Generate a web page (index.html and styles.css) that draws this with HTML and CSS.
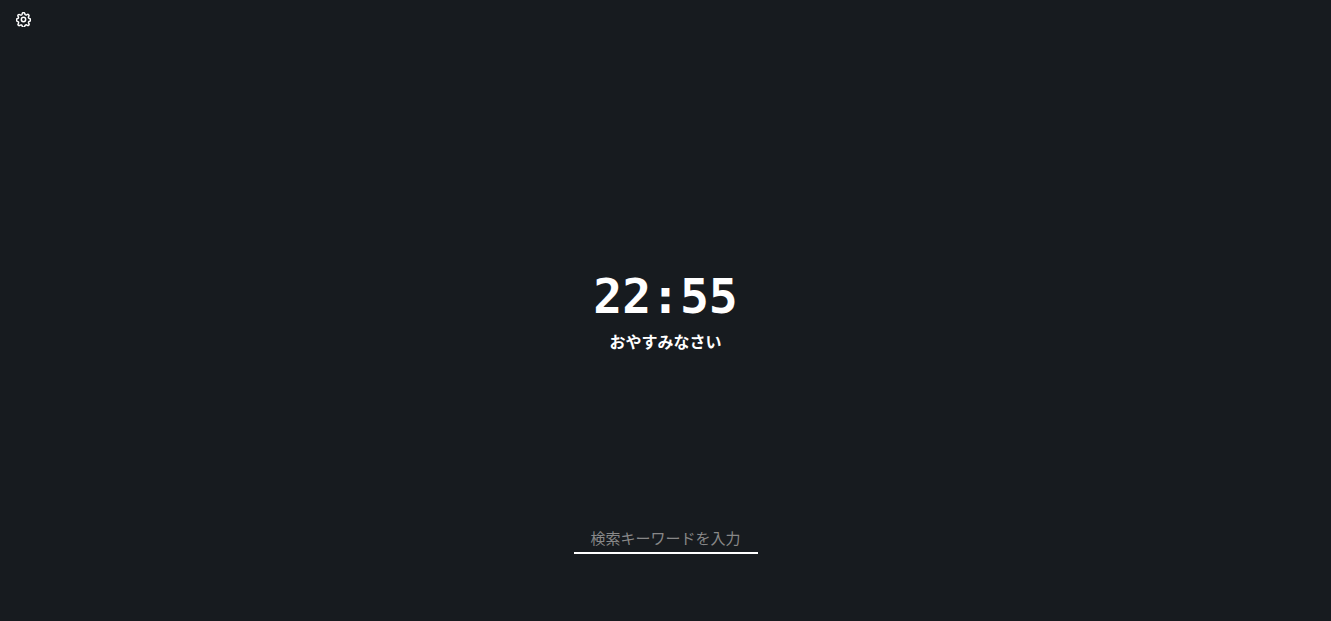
FILE: index.html
```html
<!DOCTYPE html>
<html lang="ja">
<head>
<meta charset="utf-8">
<title>22:55</title>
<link rel="stylesheet" href="styles.css">
</head>
<body>
<header class="toolbar">
<button class="settings" type="button" aria-label="設定">
<svg class="gear" viewBox="0 0 16 16" aria-hidden="true"><circle cx="8" cy="8" r="2.3"/><path d="M9.3 1.5c-.4-1.2-2.2-1.2-2.6 0l-.2.8a1.4 1.4 0 0 1-2 .8l-.6-.3c-1.1-.6-2.4.6-1.7 1.8l.3.5a1.4 1.4 0 0 1-.8 2l-.5.1c-1.2.4-1.2 2.2 0 2.6l.6.2a1.4 1.4 0 0 1 .8 2l-.3.6c-.6 1.1.6 2.4 1.8 1.7l.5-.3a1.4 1.4 0 0 1 2 .8l.1.5c.4 1.2 2.2 1.2 2.6 0l.2-.6a1.4 1.4 0 0 1 2-.8l.6.3c1.1.6 2.4-.6 1.7-1.8l-.3-.5a1.4 1.4 0 0 1 .8-2l.5-.1c1.2-.4 1.2-2.2 0-2.6l-.6-.2a1.4 1.4 0 0 1-.8-2l.3-.6c.6-1.1-.6-2.4-1.8-1.7l-.5.3a1.4 1.4 0 0 1-2-.8z"/></svg>
</button>
</header>
<main class="clock">
<time class="time" datetime="22:55">22:55</time>
<p class="greeting">おやすみなさい</p>
</main>
<form class="search">
<input class="query" type="text" placeholder="検索キーワードを入力" aria-label="検索キーワードを入力">
</form>
</body>
</html>
```
FILE: styles.css
```css
* { box-sizing: border-box; }
body {
  margin: 0;
  min-height: 100vh;
  display: grid;
  grid-template-rows: 1fr auto 1fr;
  justify-items: center;
  background: #171b1f;
  color: #fff;
  font-family: "Noto Sans CJK JP", sans-serif;
}
.toolbar { justify-self: start; padding: 12px 16px; }
.settings { display: block; padding: 0; border: 0; background: none; color: inherit; cursor: pointer; }
.gear { display: block; width: 15px; height: 15px; fill: none; stroke: currentColor; stroke-width: 1.6; }
.clock { text-align: center; }
.time { display: block; font: bold 48px/56px "DejaVu Sans Mono", monospace; }
.greeting { margin: 5px 0 0; font-size: 16px; line-height: 24px; font-weight: bold; }
.search { align-self: end; padding-bottom: 67px; }
.query {
  display: block;
  width: 184px;
  height: 32px;
  padding: 0;
  border: 0;
  border-bottom: 2px solid #fff;
  background: none;
  color: #fff;
  font: 15px/24px "Noto Sans CJK JP", sans-serif;
  text-align: center;
  outline: 0;
}
.query::placeholder { color: #888; }
```
